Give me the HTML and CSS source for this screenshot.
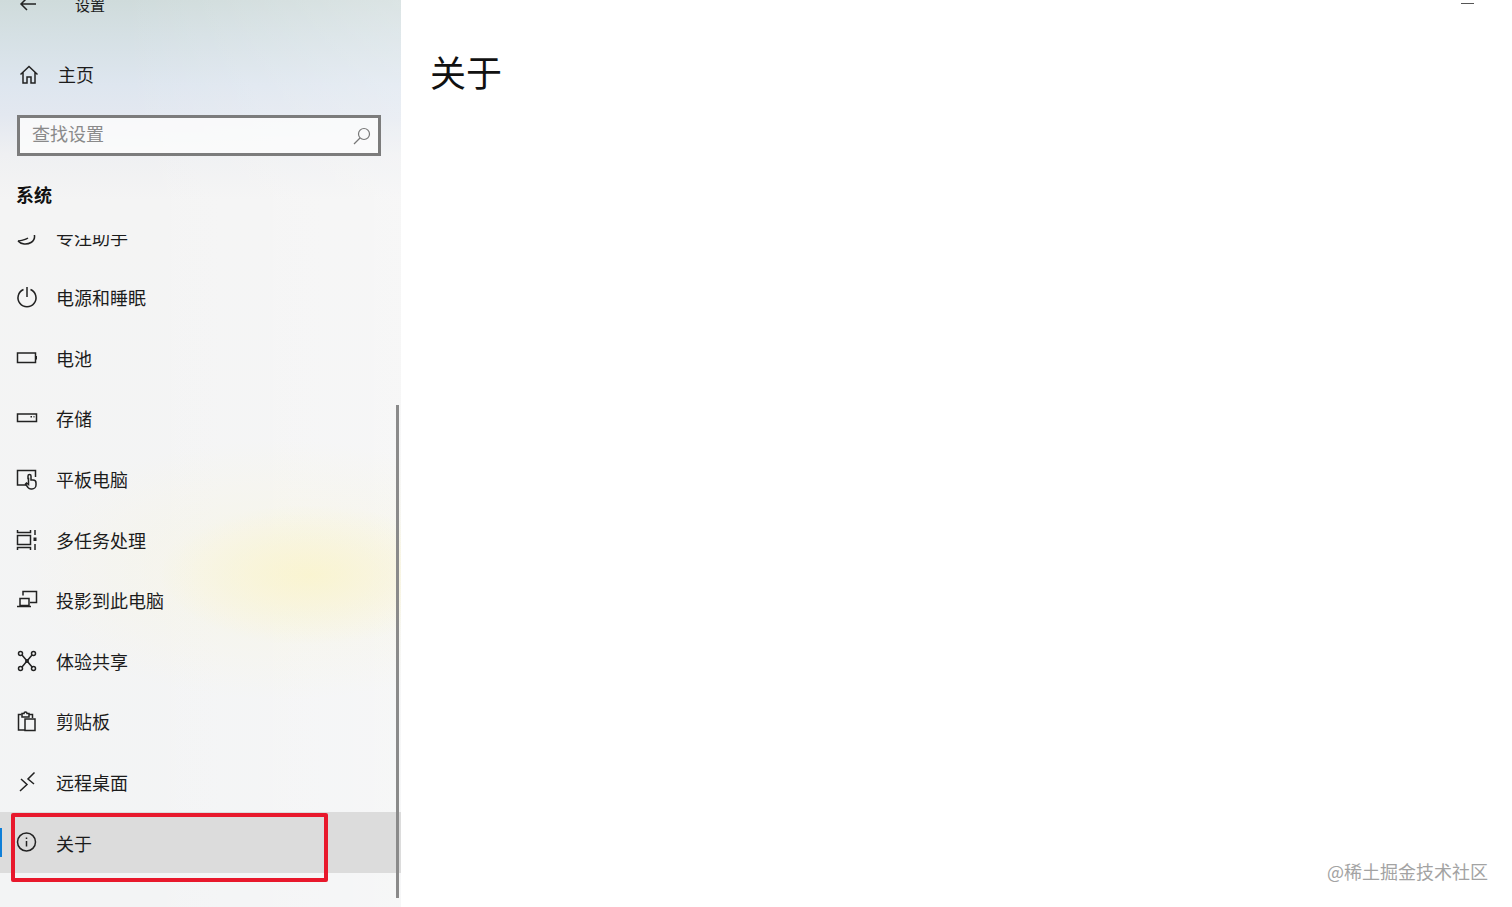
FILE: index.html
```html
<!DOCTYPE html>
<html lang="zh-CN">
<head>
  <meta charset="UTF-8">
  <title>设置</title>
  <link rel="stylesheet" href="styles.css">
</head>
<body>
  <div class="window">
    <aside class="sidebar">
      <div class="sidebar-bg"></div>

      <div class="titlebar">
        <svg class="back-icon" width="18" height="14" viewBox="0 0 18 14"><path d="M17 7H2M8 1L2 7l6 6"/></svg>
        <span>设置</span>
      </div>

      <div class="home-row">
        <svg class="icon" width="22" height="22" viewBox="0 0 22 22"><path d="M2.500 10.500L11 2.500l8.500 8M5 8.500V19h4v-6h4v6h4V8.500"/></svg>
        <span>主页</span>
      </div>

      <div class="search-box">
        <span>查找设置</span>
        <svg class="search-icon" width="18" height="18" viewBox="0 0 18 18"><circle cx="11" cy="7" r="5.500"/><path d="M7 11l-6 6"/></svg>
      </div>

      <h2 class="section-title">系统</h2>

      <div class="nav-list">
        <div class="nav-item first">
          <svg class="icon" width="22" height="22" viewBox="0 0 22 22"><path d="M2 15c3 3.500 9 4 13 1.500s4-6 3-9"/><path d="M2 15c3-.5 7-1 10-3"/></svg>
          <span>专注助手</span>
        </div>
        <div class="nav-item">
          <svg class="icon" width="22" height="22" viewBox="0 0 22 22"><path d="M7.500 3.500a9 9 0 1 0 7 0M11 1v10"/></svg>
          <span>电源和睡眠</span>
        </div>
        <div class="nav-item">
          <svg class="icon" width="22" height="22" viewBox="0 0 22 22"><rect x="1.500" y="6" width="18" height="9.500"/><path class="solid" d="M19.500 9h1.500v3.500h-1.500z"/></svg>
          <span>电池</span>
        </div>
        <div class="nav-item">
          <svg class="icon" width="22" height="22" viewBox="0 0 22 22"><rect x="1.500" y="7" width="19" height="7.500"/><path d="M14.500 9.800h1.500M17.500 9.800h1"/></svg>
          <span>存储</span>
        </div>
        <div class="nav-item">
          <svg class="icon" width="22" height="22" viewBox="0 0 22 22"><path d="M11 17H1.500V2.500h18V9"/><path d="M12 10.500V8a1.500 1.500 0 0 1 3 0v4h2a3 3 0 0 1 3 3v2a4 4 0 0 1-4 4h-1a4 4 0 0 1-3-1.500l-2.500-3.500 1-1 2 1.500v-6z"/></svg>
          <span>平板电脑</span>
        </div>
        <div class="nav-item">
          <svg class="icon" width="22" height="22" viewBox="0 0 22 22"><path d="M1.500 1v2.500h13V1M1.500 21v-2.500h13V21"/><rect x="1.500" y="6.500" width="13" height="9"/><path d="M19 1v5M19 15v6"/><path class="solid" d="M17.500 8.500h3v3.500h-3z"/></svg>
          <span>多任务处理</span>
        </div>
        <div class="nav-item">
          <svg class="icon" width="22" height="22" viewBox="0 0 22 22"><path d="M7 6.500V2.500h13.500v11H14"/><path d="M4 9.500h9v7H4zM1 17.500h14"/></svg>
          <span>投影到此电脑</span>
        </div>
        <div class="nav-item">
          <svg class="icon" width="22" height="22" viewBox="0 0 22 22"><circle cx="4.500" cy="3.500" r="2"/><circle cx="17.500" cy="3.500" r="2"/><circle cx="4.500" cy="18.500" r="2"/><circle cx="17.500" cy="18.500" r="2"/><circle cx="11" cy="11" r="1.200"/><path d="M6 5l10.500 12.500M16 5L6 17"/></svg>
          <span>体验共享</span>
        </div>
        <div class="nav-item">
          <svg class="icon" width="22" height="22" viewBox="0 0 22 22"><path d="M9 20H2.500V4.500h3M13 4.500h3.500V8"/><path d="M6 7V3.500h2a1.500 1.500 0 0 1 3 0h2V7z"/><rect x="9" y="9" width="10" height="11.500"/></svg>
          <span>剪贴板</span>
        </div>
        <div class="nav-item">
          <svg class="icon" width="22" height="22" viewBox="0 0 22 22"><path d="M5 8l6 5.500-7 6.500M18.500 1.500L12 8l6 5"/></svg>
          <span>远程桌面</span>
        </div>
        <div class="nav-item active">
          <svg class="icon" width="22" height="22" viewBox="0 0 22 22"><circle cx="10.500" cy="10" r="9"/><path d="M10.500 9v5.500M10.500 5.500v1.500"/></svg>
          <span>关于</span>
        </div>
      </div>

      <div class="scroll-thumb"></div>
      <div class="red-mark"></div>
    </aside>

    <main class="content">
      <div class="minimize"></div>
      <h1>关于</h1>
    </main>

    <div class="watermark">@稀土掘金技术社区</div>
  </div>
</body>
</html>
```

FILE: styles.css
```css
* {
  margin: 0;
  padding: 0;
  box-sizing: border-box;
  font-family: "Noto Sans CJK SC", "Noto Sans", sans-serif;
}

body {
  background: #fff;
  color: #1c1c1c;
}

.window {
  display: flex;
  height: 907px;
  overflow: hidden;
  position: relative;
}

.sidebar {
  width: 401px;
  flex-shrink: 0;
  display: flex;
  flex-direction: column;
  position: relative;
  overflow: hidden;
  background: #f4f4f4;
}

.sidebar-bg {
  position: absolute;
  inset: 0;
  background:
    radial-gradient(ellipse 150px 70px at 310px 575px, rgba(250, 244, 205, 0.85), rgba(250, 244, 205, 0) 100%),
    radial-gradient(ellipse 260px 130px at 280px 570px, rgba(248, 245, 225, 0.7), rgba(248, 245, 225, 0) 100%),
    linear-gradient(90deg, rgba(255, 255, 255, 0) 30%, rgba(255, 255, 255, 0.25) 100%),
    linear-gradient(#cfdbdb 0, #d5e0e4 35px, #dee6ef 85px, #e3e8f0 115px, #eff0f2 155px, #f4f4f4 200px, #f3f4f5 100%);
}

.titlebar,
.home-row,
.search-box,
.section-title,
.nav-list {
  position: relative;
}

.titlebar {
  height: 40px;
  margin-top: -16px;
  padding-left: 19px;
  display: flex;
  align-items: center;
  gap: 38px;
  font-size: 15px;
}

svg {
  fill: none;
  stroke: #222;
  stroke-width: 1.500;
  flex-shrink: 0;
}

svg .solid {
  fill: #222;
  stroke: none;
}

.home-row {
  height: 40px;
  margin-top: 31px;
  padding-left: 18px;
  display: flex;
  align-items: center;
  gap: 18px;
  font-size: 18px;
}

.home-row span {
  padding-bottom: 2px;
}

.search-box {
  height: 41px;
  margin: 20px 20px 0 17px;
  padding: 0 15px 5px 12px;
  display: flex;
  align-items: center;
  justify-content: space-between;
  border: 3px solid #7c7c7c;
  background: rgba(252, 252, 252, 0.85);
  color: #8a8a8a;
  font-size: 18px;
}

.search-box svg {
  stroke: #777;
  stroke-width: 1.200;
  margin: 5px -8px 0 0;
}

.section-title {
  margin: 25px 0 0 16px;
  height: 26px;
  font-size: 18px;
  line-height: 26px;
  font-weight: 700;
  color: #111;
}

.nav-list {
  margin-top: 28px;
  flex: 1;
  overflow: hidden;
}

.nav-item {
  height: 60.600px;
  padding-left: 16px;
  display: flex;
  align-items: center;
  gap: 18px;
  font-size: 18px;
  position: relative;
}

.nav-item.first {
  margin-top: -28.700px;
}

.nav-item.active {
  background: #dcdcdc;
}

.nav-item.active::before {
  content: "";
  position: absolute;
  left: 0;
  top: 16px;
  width: 2px;
  height: 29px;
  background: #0f7fd8;
}

.scroll-thumb {
  position: absolute;
  left: 396px;
  top: 405px;
  width: 3px;
  height: 493px;
  background: #8a8a8a;
}

.red-mark {
  position: absolute;
  left: 11px;
  top: 813px;
  width: 317px;
  height: 69px;
  border: 4px solid #e8182c;
  border-radius: 2px;
}

.content {
  flex: 1;
  padding: 45px 0 0 29px;
  position: relative;
}

.content h1 {
  font-size: 36px;
  line-height: 52px;
  font-weight: 400;
  color: #111;
}

.minimize {
  position: absolute;
  left: 1060px;
  top: 3px;
  width: 13px;
  height: 1px;
  background: #555;
}

.watermark {
  position: absolute;
  right: 24px;
  top: 858px;
  font-size: 18px;
  line-height: 26px;
  color: #a3a3a3;
}
```
